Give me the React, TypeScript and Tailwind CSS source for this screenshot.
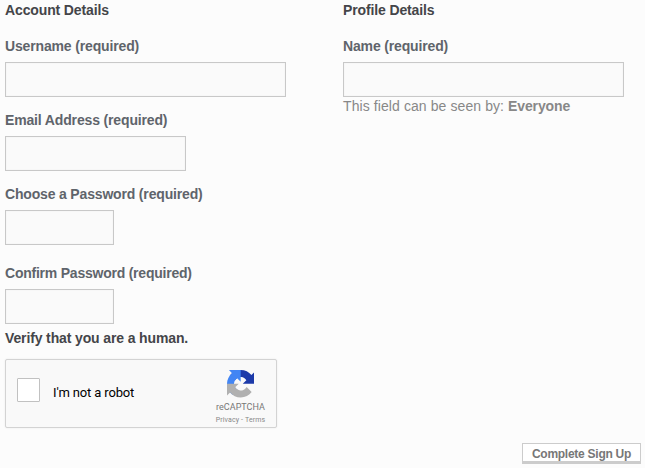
import type { ReactNode } from "react";

function Heading({ children }: { children: ReactNode }) {
  return (
    <h4 className="h-5 text-sm leading-5 font-bold tracking-[-0.13px] text-[#444549]">{children}</h4>
  );
}

interface FieldProps {
  label: string;
  width: string;
  className: string;
  tracking?: string;
}

function Field({ label, width, className, tracking = "tracking-[-0.15px]" }: FieldProps) {
  return (
    <div className={className}>
      <label className={`block text-sm leading-5 font-bold text-[#5f646b] ${tracking}`}>
        {label}
        <input
          className={`mt-[6px] block h-[35px] border border-[#c8c8c8] bg-[#fafafa] shadow-[inset_0_0_1px_#ddd] outline-none ${width}`}
        />
      </label>
    </div>
  );
}

function RecaptchaLogo() {
  return (
    <svg viewBox="0 0 64 64" className="h-[27.5px] w-[27.5px]">
      <path
        fill="#1c3aa9"
        d="M64 31.955l-.033-1.37V4.687l-7.16 7.16C50.948 4.674 42.033.093 32.05.093c-10.4 0-19.622 4.96-25.458 12.64l11.736 11.86a15.55 15.55 0 0 1 4.754-5.334c2.05-1.6 4.952-2.906 8.968-2.906.485 0 .86.057 1.135.163 4.976.393 9.288 3.14 11.828 7.124l-8.307 8.307L64 31.953"
      />
      <path
        fill="#4285f4"
        d="M31.862.094l-1.37.033H4.594l7.16 7.16C4.58 13.147 0 22.06 0 32.046c0 10.4 4.96 19.622 12.64 25.458L24.5 45.768a15.55 15.55 0 0 1-5.334-4.754c-1.6-2.05-2.906-4.952-2.906-8.968 0-.485.057-.86.163-1.135.393-4.976 3.14-9.288 7.124-11.828l8.307 8.307L31.86.095"
      />
      <path
        fill="#b0b0b0"
        d="M.001 32.045l.033 1.37v25.898l7.16-7.16c5.86 7.173 14.774 11.754 24.76 11.754 10.4 0 19.622-4.96 25.458-12.64l-11.736-11.86a15.55 15.55 0 0 1-4.754 5.334c-2.05 1.6-4.952 2.906-8.968 2.906-.485 0-.86-.057-1.135-.163-4.976-.393-9.288-3.14-11.828-7.124l8.307-8.307c-10.522.04-22.4.066-27.295-.005"
      />
    </svg>
  );
}

function Recaptcha() {
  return (
    <div className="mt-[11px] flex h-[69px] w-[272px] rounded-[2px] border border-[#d3d3d3] bg-[#f9f9f9] font-['Roboto',sans-serif] shadow-[0_0_2px_rgba(0,0,0,0.08)]">
      <div className="mt-[18px] ml-[11px] h-6 w-[23px] rounded-[1px] border border-[#c1c1c1] bg-white" />
      <div className="mt-[24px] ml-[13px] text-[13px] leading-[17px] tracking-[-0.14px] whitespace-nowrap text-black">
        I'm not a robot
      </div>
      <div className="mt-[10px] mr-[7px] ml-auto flex w-[57px] flex-col items-center">
        <RecaptchaLogo />
        <div className="mt-[3.5px] text-[9px] leading-3 tracking-[0.03px] text-[#777]">reCAPTCHA</div>
        <div className="mt-px text-[7px] leading-3 tracking-[0.13px] whitespace-nowrap text-[#888]">
          Privacy - Terms
        </div>
      </div>
    </div>
  );
}

export default function App() {
  return (
    <form className="flex h-[468px] w-[645px] flex-col overflow-hidden bg-[#fcfcfc] pl-[5px] font-['Liberation_Sans',Arial,sans-serif]">
      <div className="flex h-[443px]">
        <section className="w-[338px]">
          <Heading>Account Details</Heading>
          <Field label="Username (required)" width="w-[281px]" className="mt-4 h-[61px]" />
          <Field label="Email Address (required)" width="w-[181px]" className="mt-[13px] h-[61px]" />
          <Field
            label="Choose a Password (required)"
            width="w-[109px]"
            className="mt-[13px] h-[61px]"
            tracking="tracking-[-0.17px]"
          />
          <Field
            label="Confirm Password (required)"
            width="w-[109px]"
            className="mt-[18px] h-[61px]"
            tracking="tracking-[-0.23px]"
          />
          <div className="mt-1 text-sm leading-5 font-bold tracking-[-0.13px] text-[#444549]">
            Verify that you are a human.
          </div>
          <Recaptcha />
        </section>
        <section>
          <Heading>Profile Details</Heading>
          <Field label="Name (required)" width="w-[281px]" className="mt-4 h-[60px]" />
          <p className="text-sm leading-5 tracking-[0.09px] text-[#888]">
            This field can be seen by:{" "}
            <strong className="font-bold tracking-[-0.13px]">Everyone</strong>
          </p>
        </section>
      </div>
      <button
        type="button"
        className="mr-1 h-[21px] w-[119px] self-end border border-b-[3px] border-[#ccc] bg-white pt-[2px] text-xs leading-[17px] font-bold tracking-[-0.26px] whitespace-nowrap text-[#777]"
      >
        Complete Sign Up
      </button>
    </form>
  );
}
